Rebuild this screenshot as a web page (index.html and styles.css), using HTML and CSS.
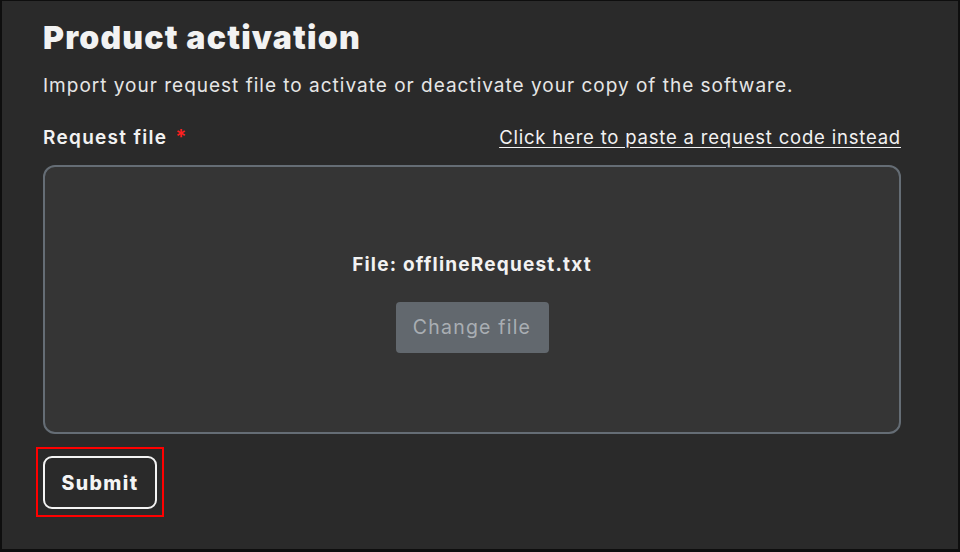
FILE: index.html
```html
<!DOCTYPE html>
<html>
<head>
<meta charset="utf-8">
<link rel="stylesheet" href="styles.css">
</head>
<body>
<div class="frame">
  <main class="panel">
    <h1 class="title">Product activation</h1>
    <p class="desc">Import your request file to activate or deactivate your copy of the software.</p>
    <div class="label-row">
      <span class="label">Request file <span class="req">*</span></span>
      <a class="link" href="#">Click here to paste a request code instead</a>
    </div>
    <div class="dropzone">
      <div class="filename">File: offlineRequest.txt</div>
      <button class="change">Change file</button>
    </div>
    <div class="submit-wrap">
      <button class="submit">Submit</button>
    </div>
  </main>
</div>
</body>
</html>
```
FILE: styles.css
```css
html, body {
  margin: 0;
  padding: 0;
  background: #0e0e0e;
}
.frame {
  width: 960px;
  height: 552px;
  box-sizing: border-box;
  padding: 1px 2px 3px 2px;
  background: #0e0e0e;
}
.panel {
  height: 100%;
  box-sizing: border-box;
  background: #2a2a2a;
  padding: 16px 57px 0 41px;
  font-family: Inter, "Open Sans", sans-serif;
  color: #f2f2f2;
}
.title {
  margin: 0;
  font-size: 32px;
  font-weight: 900;
  line-height: 42px;
  letter-spacing: 1.2px;
}
.desc {
  margin: 14px 0 0 0;
  font-size: 19px;
  line-height: 26px;
  color: #e6e6e6;
  letter-spacing: 1px;
}
.label-row {
  display: flex;
  justify-content: space-between;
  align-items: baseline;
  margin-top: 26px;
  height: 28px;
}
.label {
  font-size: 19px;
  font-weight: 600;
  letter-spacing: 1.3px;
}
.req {
  color: #ff1f1f;
  margin-left: 2px;
  font-size: 20px;
}
.link {
  color: #f2f2f2;
  font-size: 18.5px;
  text-decoration: underline;
  text-underline-offset: 3px;
  letter-spacing: 0.8px;
}
.dropzone {
  margin-top: 12px;
  height: 269px;
  box-sizing: border-box;
  border: 2px solid #656d75;
  border-radius: 12px;
  background: #353535;
  display: flex;
  flex-direction: column;
  align-items: center;
  justify-content: center;
  padding-top: 6px;
}
.filename {
  font-size: 19px;
  font-weight: 700;
  letter-spacing: 1.2px;
}
.change {
  margin-top: 26px;
  width: 153px;
  height: 51px;
  border: none;
  border-radius: 4px;
  background: #62686e;
  color: #a9aeb3;
  font-family: inherit;
  font-size: 19.5px;
  letter-spacing: 1.2px;
}
.submit-wrap {
  margin-top: 13px;
  margin-left: -7px;
  width: 128px;
  height: 70px;
  box-sizing: border-box;
  border: 2px solid #ff0000;
  padding: 7px 0 0 5px;
}
.submit {
  width: 114px;
  height: 53px;
  box-sizing: border-box;
  border: 2px solid #f4f4f4;
  border-radius: 9px;
  background: #2a2a2a;
  color: #f4f4f4;
  font-family: inherit;
  font-size: 19.5px;
  font-weight: 800;
  letter-spacing: 1.4px;
}
```
